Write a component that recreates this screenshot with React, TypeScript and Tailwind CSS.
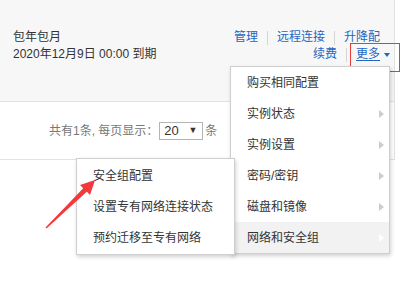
import React from "react";

const font = { fontFamily: '"Liberation Sans", "Noto Sans CJK SC", sans-serif' };

const mainItems = [
  { label: "购买相同配置", sub: false },
  { label: "实例状态", sub: true },
  { label: "实例设置", sub: true },
  { label: "密码/密钥", sub: true },
  { label: "磁盘和镜像", sub: true },
  { label: "网络和安全组", sub: true, active: true },
];

const subItems = ["安全组配置", "设置专有网络连接状态", "预约迁移至专有网络"];

function Sep() {
  return <span className="mx-[9px] inline-block h-[14px] w-px bg-[#d5d5d5]" />;
}

export default function App() {
  return (
    <div className="relative h-[301px] w-[409px] overflow-hidden bg-white text-[12px] text-[#333]" style={font}>
      {/* instance row */}
      <div className="flex h-[102px] w-[395px] justify-between border-r border-b border-[#e2e2e2] bg-[#f7f7f7] pt-[29px] pl-[13px] pr-[4px]">
        <div className="leading-[17px]">
          <div>包年包月</div>
          <div>2020年12月9日 00:00 到期</div>
        </div>
        <div className="flex flex-col items-end leading-[17px] text-[#2366c2]">
          <div className="mr-[10px] flex items-center">
            <span>管理</span>
            <Sep />
            <span>远程连接</span>
            <Sep />
            <span>升降配</span>
          </div>
          <div className="flex items-center">
            <span>续费</span>
            <Sep />
            <span className="underline underline-offset-2">更多</span>
            <span className="ml-[4px] mt-[1px] h-0 w-0 border-x-[3px] border-t-[4px] border-x-transparent border-t-[#2366c2]" />
          </div>
        </div>
      </div>

      {/* pagination row */}
      <div className="flex h-[58px] w-[395px] items-center border-r border-b border-[#e2e2e2] pl-[49px] text-[#777]">
        <span>共有1条, 每页显示：</span>
        <div className="ml-px flex h-[18px] w-[44px] items-center justify-between border border-[#b5b5b5] pl-[4px] pr-[5px] text-[13px] text-[#333]">
          <span>20</span>
          <span className="text-[9px]">▼</span>
        </div>
        <span className="ml-[2px]">条</span>
      </div>

      {/* annotation box */}
      <div className="absolute left-[350px] top-[43px] h-[29px] w-[50px] border border-[#e83a3a]" />

      {/* main dropdown */}
      <div className="absolute left-[230px] top-[66px] w-[160px] border border-[#cfcfcf] bg-white shadow-[1px_2px_4px_rgba(0,0,0,0.18)]">
        {mainItems.map((item) => (
          <div
            key={item.label}
            className={`flex h-[31px] items-center justify-between pl-[16px] pr-[5px] ${item.active ? "bg-[#f2f2f2]" : ""}`}
          >
            <span>{item.label}</span>
            {item.sub && (
              <span
                className={`h-0 w-0 border-y-[4px] border-l-[5px] border-y-transparent ${item.active ? "border-l-white" : "border-l-[#cccccc]"}`}
              />
            )}
          </div>
        ))}
      </div>

      {/* sub dropdown */}
      <div className="absolute left-[76px] top-[158px] w-[159px] border border-[#cfcfcf] bg-white py-px shadow-[1px_2px_4px_rgba(0,0,0,0.18)]">
        {subItems.map((label) => (
          <div key={label} className="flex h-[31px] items-center pl-[16px]">
            {label}
          </div>
        ))}
      </div>

      {/* red arrow */}
      <svg className="absolute left-0 top-0" width="409" height="301" viewBox="0 0 409 301">
        <polygon
          points="95,180 80,185 83.2,188.2 45.5,227.5 46.5,228.5 86.8,191.8 90,195"
          fill="#f2393b"
        />
      </svg>
    </div>
  );
}
